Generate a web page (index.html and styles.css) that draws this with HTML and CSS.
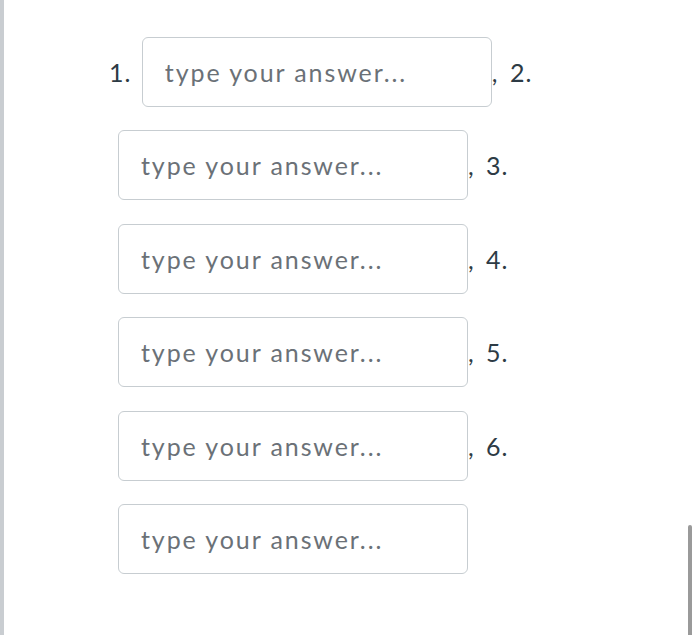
FILE: index.html
```html
<!DOCTYPE html>
<html>
<head>
<meta charset="utf-8">
<link rel="stylesheet" href="styles.css">
</head>
<body>
<div class="page">
  <div class="rail"></div>
  <div class="question">
    <span class="num">1.</span> <input class="ans" type="text" placeholder="type your answer..."><span class="sep">, 2.</span> <input class="ans" type="text" placeholder="type your answer..."><span class="sep">, 3.</span> <input class="ans" type="text" placeholder="type your answer..."><span class="sep">, 4.</span> <input class="ans" type="text" placeholder="type your answer..."><span class="sep">, 5.</span> <input class="ans" type="text" placeholder="type your answer..."><span class="sep">, 6.</span> <input class="ans" type="text" placeholder="type your answer...">
  </div>
  <div class="scroll-thumb"></div>
</div>
</body>
</html>
```
FILE: styles.css
```css
html, body {
  margin: 0;
  padding: 0;
  background: #ffffff;
}
.page {
  position: relative;
  display: flex;
  width: 700px;
  height: 635px;
  overflow: hidden;
  font-family: Lato, "Open Sans", sans-serif;
}
.rail {
  width: 4px;
  flex: none;
  background: #c9cdd1;
}
.question {
  width: 470px;
  padding: 25px 0 0 105px;
  font-size: 25px;
  line-height: 30px;
  color: #2d3b45;
}
.num {
  margin-right: -5px;
  letter-spacing: 1px;
  vertical-align: middle;
}
.sep {
  letter-spacing: 1px;
  word-spacing: 4px;
  vertical-align: middle;
}
.ans {
  box-sizing: border-box;
  width: 350px;
  height: 70px;
  margin: 12px 0 11.4px 9px;
  padding: 0 22px;
  border: 1px solid #c7cdd1;
  border-radius: 6px;
  background: #fff;
  font-family: Lato, "Open Sans", sans-serif;
  font-size: 25px;
  letter-spacing: 1.9px;
  color: #2d3b45;
  vertical-align: middle;
  outline: none;
}
.ans::placeholder {
  color: #6b7177;
  opacity: 1;
}
.scroll-thumb {
  position: absolute;
  left: 688px;
  top: 525px;
  width: 4px;
  height: 120px;
  border-radius: 2px;
  background: #9a9a9a;
}
```
